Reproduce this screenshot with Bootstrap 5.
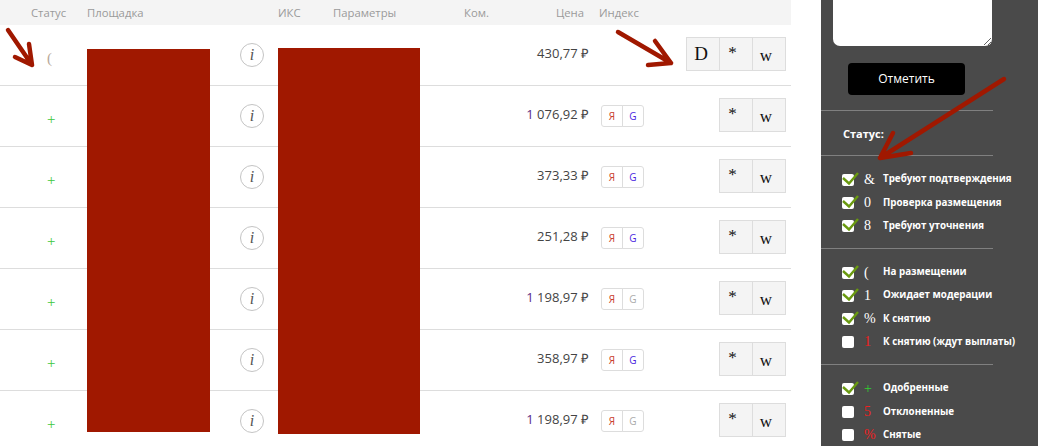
<!DOCTYPE html>
<html lang="ru">
<head>
  <meta charset="UTF-8" />
  <title>Площадки</title>
  <link href="https://cdn.jsdelivr.net/npm/bootstrap@5.3.0/dist/css/bootstrap.min.css" rel="stylesheet" />
  <style>
    html, body { height: 446px; overflow: hidden; }
    body { font-family: "Open Sans", "Liberation Sans", sans-serif; background: #fff; color: #444; font-size: 12px; }
    .page-wrap { width: 1038px; height: 446px; position: relative; overflow: hidden; }
    .main-col { width: 791px; flex: none; }
    .side-col { width: 217px; height: 446px; background: #4a4a4a; margin-left: 30px; flex: none; color: #fff; }

    /* table */
    .head-row { height: 25px; background: #f4f4f4; color: #9a9a9a; font-size: 11.3px; line-height: 17px; }
    .data-row { height: 61px; border-bottom: 1px solid #ddd; }
    .c-status { width: 87px; padding-left: 31px; }
    .c-site { width: 136px; }
    .c-info { width: 55px; }
    .c-iks { width: 55px; }
    .c-params { width: 131px; }
    .c-kom { width: 60px; }
    .c-price { width: 65px; text-align: right; }
    .head-row .c-price { padding-right: 5px; }
    .head-row .c-index { padding-left: 10px; }
    .c-index { flex: 1; padding-left: 12px; }
    .status-mark { font-family: "Liberation Serif", serif; font-size: 15px; padding-left: 16px; line-height: 1; position: relative; top: 4px; }
    .info-dot { width: 24px; height: 24px; border: 1px solid #c4c4c4; border-radius: 50%; font: italic 16px/22px "Liberation Serif", serif; color: #555; text-align: center; margin-left: 17px; }
    .price-txt { font-size: 13px; color: #444; white-space: nowrap; margin-bottom: 2px; }
    .price-one { color: #5b2a86; }
    .se-box { width: 22px; height: 22px; border: 1px solid #ddd; font-size: 10px; line-height: 20px; text-align: center; margin-right: -1px; }
    .se-box.left { border-radius: 3px 0 0 3px; color: #c8402a; }
    .se-box.right { border-radius: 0 3px 3px 0; }
    .se-on { color: #4a1fe0; }
    .se-off { color: #aaa; }
    .act-wrap { margin-left: auto; margin-right: 5px; margin-bottom: 2px; }
    .act-box { width: 34px; height: 34px; border: 1px solid #ddd; background: #f4f4f4; margin-left: -1px; color: #111; font-family: "Liberation Serif", serif; text-align: center; font-size: 17px; line-height: 32px; }
    .act-box.dee { font-size: 19px; padding-right: 4px; }
    .act-box.star { line-height: 30px; padding-right: 7px; }
    .act-box.dubl { line-height: 36px; padding-right: 6px; }

    /* sidebar */
    .note-area { width: 159px; height: 46px; margin: 0 0 17px 12px; background: #fff; border: 0; border-radius: 0 0 7px 7px; display: block; }
    .mark-btn { display: block; width: 117px; height: 32px; margin: 0 0 15px 27px; background: #000; border-radius: 4px; color: #fff; font-size: 12px; border: 0; padding: 0; }
    .side-line { width: 172px; border-top: 1px solid #808080; }
    .side-title { font-weight: 700; font-size: 11px; height: 44px; padding: 14px 0 0 22px; line-height: 17px; }
    .chk-group { padding: 12px 0 10px; }
    .chk-row { height: 23.3px; padding-left: 21px; font-size: 9.8px; font-weight: 700; white-space: nowrap; }
    .chk-box { width: 12px; height: 12px; background: #fff; border-radius: 2px; position: relative; flex: none; }
    .chk-box svg { position: absolute; left: 0; top: -3px; }
    .chk-sign { width: 20px; padding-left: 10px; font-family: "Liberation Serif", serif; font-size: 14px; font-weight: 400; flex: none; box-sizing: content-box; margin-right: -1px; line-height: 1; }
    .sign-red { color: #f02020; }
    .sign-green { color: #30d030; }

    /* overlays: the redaction blocks and hand-drawn arrows */
    .cover-one { position: absolute; left: 87px; top: 49px; width: 123px; height: 383px; background: #a01800; }
    .cover-two { position: absolute; left: 278px; top: 48px; width: 142px; height: 386px; background: #a01800; }
    .arrows { position: absolute; left: 0; top: 0; }
  </style>
</head>
<body>
  <div class="page-wrap d-flex">
    <div class="main-col">
      <div class="head-row d-flex align-items-center">
        <div class="c-status">Статус</div>
        <div class="c-site">Площадка</div>
        <div class="c-info"></div>
        <div class="c-iks">ИКС</div>
        <div class="c-params">Параметры</div>
        <div class="c-kom">Ком.</div>
        <div class="c-price">Цена</div>
        <div class="c-index">Индекс</div>
      </div>
      <div id="rows"></div>
    </div>

    <div class="side-col">
      <textarea class="note-area"></textarea>
      <button class="mark-btn">Отметить</button>
      <div class="side-line"></div>
      <div class="side-title">Статус:</div>
      <div class="side-line"></div>
      <div id="group-a" class="chk-group"></div>
      <div class="side-line"></div>
      <div id="group-b" class="chk-group"></div>
      <div class="side-line"></div>
      <div id="group-c" class="chk-group"></div>
    </div>

    <div class="cover-one"></div>
    <div class="cover-two"></div>
    <svg class="arrows" width="1038" height="446" fill="none" stroke="#a01800" stroke-width="4.5" stroke-linecap="round" stroke-linejoin="round">
      <path d="M8 30 L32 65 M29 44 L32 65 L15 57" />
      <path d="M618 32 L671 63 M655 41 L671 63 L648 65" />
      <path d="M1004 79 L880 158 M893 133 L880 158 L911 153" />
    </svg>
  </div>

  <script>
    // rows of the table: status sign, price, index colours
    const rows = [
      { s: '(', sc: '#b8a898', p: '430,77 ₽', d: true },
      { s: '+', sc: '#3cc83c', p: '076,92 ₽', one: true, g: 'se-on' },
      { s: '+', sc: '#3cc83c', p: '373,33 ₽', g: 'se-on' },
      { s: '+', sc: '#3cc83c', p: '251,28 ₽', g: 'se-on' },
      { s: '+', sc: '#3cc83c', p: '198,97 ₽', one: true, g: 'se-off' },
      { s: '+', sc: '#3cc83c', p: '358,97 ₽', g: 'se-on' },
      { s: '+', sc: '#3cc83c', p: '198,97 ₽', one: true, g: 'se-off' }
    ];
    document.getElementById('rows').innerHTML = rows.map(r => `
      <div class="data-row d-flex align-items-center">
        <div class="c-status"><span class="status-mark" style="color:${r.sc}">${r.s}</span></div>
        <div class="c-site"></div>
        <div class="c-info"><div class="info-dot">i</div></div>
        <div class="c-iks"></div>
        <div class="c-params"></div>
        <div class="c-kom"></div>
        <div class="c-price price-txt">${r.one ? '<span class="price-one">1</span> ' : ''}${r.p}</div>
        <div class="c-index d-flex align-items-center">
          ${r.d ? '' : `<div class="se-box left">Я</div><div class="se-box right ${r.g}">G</div>`}
          <div class="act-wrap d-flex">
            ${r.d ? '<div class="act-box dee">D</div>' : ''}
            <div class="act-box star">*</div>
            <div class="act-box dubl">w</div>
          </div>
        </div>
      </div>`).join('');

    // sidebar checkboxes
    const tick = '<svg width="17" height="15" viewBox="0 0 17 15" fill="none"><path d="M1 7 L7 12.5 L16 2" stroke="#6a9a10" stroke-width="2.4"/></svg>';
    const fill = (id, items) => {
      document.getElementById(id).innerHTML = items.map(i => `
        <div class="chk-row d-flex align-items-center">
          <span class="chk-box">${i.on ? tick : ''}</span>
          <span class="chk-sign ${i.c || ''}">${i.s}</span>
          <span>${i.t}</span>
        </div>`).join('');
    };
    fill('group-a', [
      { on: 1, s: '&', t: 'Требуют подтверждения' },
      { on: 1, s: '0', t: 'Проверка размещения' },
      { on: 1, s: '8', t: 'Требуют уточнения' }
    ]);
    fill('group-b', [
      { on: 1, s: '(', t: 'На размещении' },
      { on: 1, s: '1', t: 'Ожидает модерации' },
      { on: 1, s: '%', t: 'К снятию' },
      { on: 0, s: '1', c: 'sign-red', t: 'К снятию (ждут выплаты)' }
    ]);
    fill('group-c', [
      { on: 1, s: '+', c: 'sign-green', t: 'Одобренные' },
      { on: 0, s: '5', c: 'sign-red', t: 'Отклоненные' },
      { on: 0, s: '%', c: 'sign-red', t: 'Снятые' }
    ]);
  </script>
  <script src="https://cdn.jsdelivr.net/npm/bootstrap@5.3.0/dist/js/bootstrap.bundle.min.js"></script>
</body>
</html>
